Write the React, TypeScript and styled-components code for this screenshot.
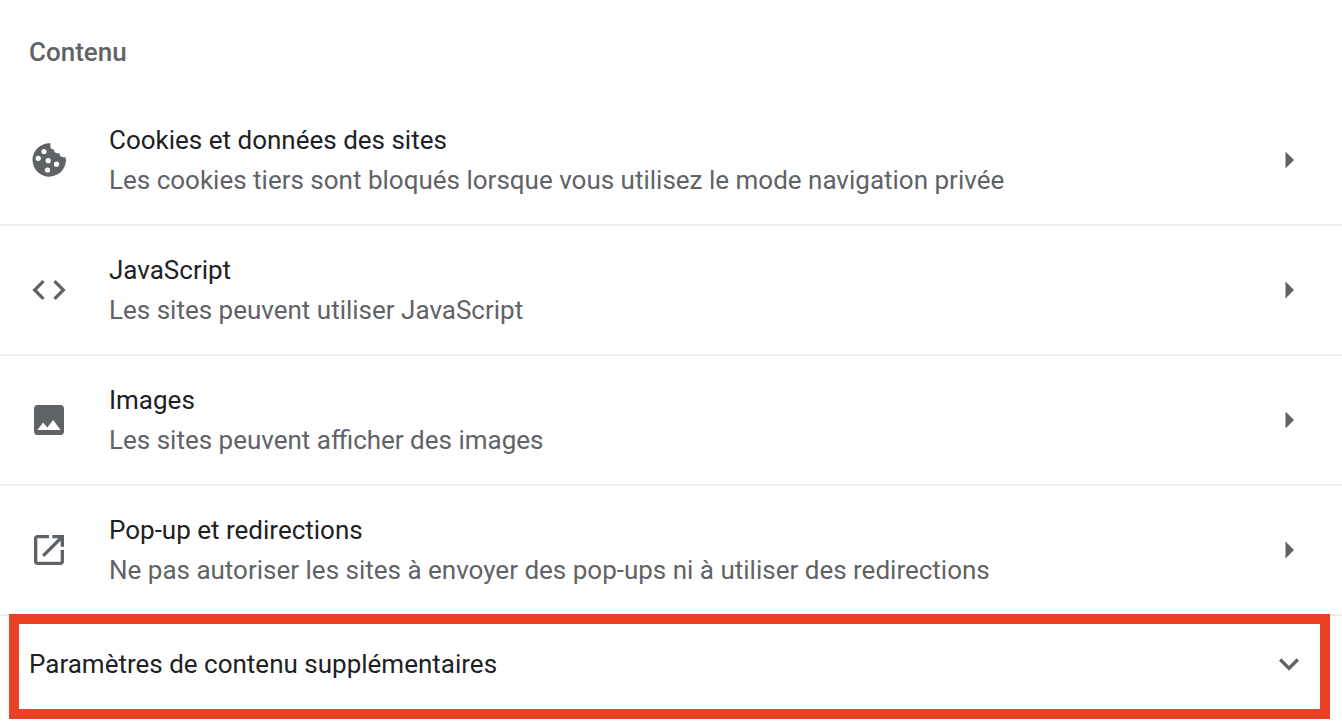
import React from 'react';
import styled, { createGlobalStyle } from 'styled-components';

const GlobalStyle = createGlobalStyle`
  * { box-sizing: border-box; }
  body { margin: 0; background: #fff; font-family: Roboto, "Liberation Sans", sans-serif; }
`;

const Section = styled.main`
  padding-top: 32px;
`;

const Heading = styled.h2`
  margin: 0 29px 24px;
  font-size: 26px;
  line-height: 40px;
  font-weight: 500;
  color: #5f6368;
`;

const List = styled.ul`
  list-style: none;
  margin: 0;
  padding: 0;
`;

const Item = styled.li`
  border-bottom: 2px solid #eeeeee;
`;

const RowButton = styled.button`
  display: flex;
  align-items: center;
  width: 100%;
  height: 128px;
  padding: 0 29px;
  border: 0;
  background: transparent;
  font: inherit;
  text-align: left;
  cursor: pointer;
`;

const Icon = styled.svg`
  flex: none;
  width: 40px;
  height: 40px;
  fill: #5f6368;
`;

const Labels = styled.span`
  flex: 1;
  display: flex;
  flex-direction: column;
  margin-left: 40px;
  font-size: 26px;
  line-height: 40px;
`;

const Title = styled.span`
  color: #202124;
`;

const Detail = styled.span`
  color: #5f6368;
`;

const MoreButton = styled.button`
  display: flex;
  align-items: center;
  justify-content: space-between;
  width: calc(100% - 21px);
  height: 105px;
  margin: -2px 12px 0 9px;
  padding: 0 11px 6px 10px;
  border: 10px solid #ea4025;
  background: #fff;
  font: inherit;
  font-size: 26px;
  line-height: 40px;
  color: #202124;
  text-align: left;
  cursor: pointer;
`;

const CookieIcon = () => (
  <Icon viewBox="0 0 40 40" aria-hidden="true">
    <path d="M21.500 3.300A16.700 16.700 0 1 0 36.700 17.200C34.800 17.600 32.700 17.300 31.300 16C30.700 15.200 30.600 14 30.300 13C28.800 13.400 27.200 13.300 26.100 12.500C25.300 11.600 25.200 10.500 25.200 9.400C23.800 9.400 22.400 8.900 21.800 7.900C21.200 6.700 21.500 4.800 21.500 3.300z" />
    <g fill="#fff">
      <circle cx="15" cy="11.500" r="2.600" />
      <circle cx="9.200" cy="18.300" r="2.600" />
      <circle cx="19.200" cy="20.700" r="2.600" />
      <circle cx="27.500" cy="24.200" r="2.600" />
      <circle cx="18.500" cy="30" r="2.600" />
    </g>
  </Icon>
);

const rows = [
  {
    title: 'Cookies et données des sites',
    detail: 'Les cookies tiers sont bloqués lorsque vous utilisez le mode navigation privée',
    path: '',
  },
  {
    title: 'JavaScript',
    detail: 'Les sites peuvent utiliser JavaScript',
    path: 'M9.4 16.6 4.8 12l4.6-4.6L8 6l-6 6 6 6 1.4-1.4zm5.2 0 4.6-4.6-4.6-4.6L16 6l6 6-6 6-1.4-1.4z',
  },
  {
    title: 'Images',
    detail: 'Les sites peuvent afficher des images',
    path: 'M21 19V5c0-1.100-.9-2-2-2H5c-1.100 0-2 .9-2 2v14c0 1.100.9 2 2 2h14c1.100 0 2-.9 2-2zM8.500 13.500l2.500 3.010L14.500 12l4.500 6H5l3.500-4.500z',
  },
  {
    title: 'Pop-up et redirections',
    detail: 'Ne pas autoriser les sites à envoyer des pop-ups ni à utiliser des redirections',
    path: 'M19 19H5V5h7V3H5c-1.110 0-2 .9-2 2v14c0 1.100.89 2 2 2h14c1.100 0 2-.9 2-2v-7h-2v7zM14 3v2h3.590l-9.830 9.830 1.410 1.410L19 6.410V10h2V3h-7z',
  },
];

export default function App() {
  return (
    <Section>
      <GlobalStyle />
      <Heading>Contenu</Heading>
      <List>
        {rows.map((row) => (
          <Item key={row.title}>
            <RowButton type="button">
              {row.path ? (
                <Icon viewBox="0 0 24 24" aria-hidden="true"><path d={row.path} /></Icon>
              ) : (
                <CookieIcon />
              )}
              <Labels>
                <Title>{row.title}</Title>
                <Detail>{row.detail}</Detail>
              </Labels>
              <Icon viewBox="0 0 40 40" aria-hidden="true"><path d="M12.500 11.500v17l8.500-8.500z" /></Icon>
            </RowButton>
          </Item>
        ))}
      </List>
      <MoreButton type="button" aria-expanded="false">
        Paramètres de contenu supplémentaires
        <Icon viewBox="0 0 24 24" aria-hidden="true"><path d="M7.410 8.590 12 13.170l4.590-4.580L18 10l-6 6-6-6z" /></Icon>
      </MoreButton>
    </Section>
  );
}
